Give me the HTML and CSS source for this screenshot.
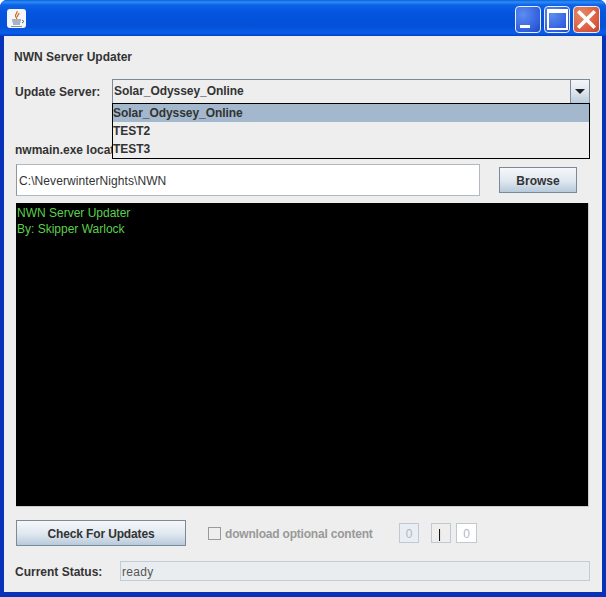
FILE: index.html
```html
<!DOCTYPE html>
<html lang="en">
<head>
<meta charset="utf-8">
<title>NWN Server Updater</title>
<link rel="stylesheet" href="styles.css">
</head>
<body>
<div class="window">
  <header class="titlebar">
    <div class="app-icon">
      <svg width="18" height="20" viewBox="0 0 18 20">
        <path d="M9 2c1 2-2 3-1.500 5s1.500 1 1 3M11 4c0 2-2 2-1.500 4" fill="none" stroke="#d2691e" stroke-width="1.200"/>
        <path d="M4 11h9M4.500 13h8M5 15h7" stroke="#5a7184" stroke-width="1.100"/>
        <path d="M14 11l2 1.500-2 1.500" fill="none" stroke="#5a7184"/>
        <path d="M3 17.500h11" stroke="#7f93a5" stroke-width="1"/>
      </svg>
    </div>
    <div class="controls">
      <div class="ctl ctl-min"><span class="min-glyph"></span></div>
      <div class="ctl ctl-max"><span class="max-glyph"></span></div>
      <div class="ctl ctl-close">
        <svg width="21" height="21" viewBox="0 0 21 21"><path d="M3.500 3.500L17.500 17.500M17.500 3.500L3.500 17.500" stroke="#fff" stroke-width="3.600" stroke-linecap="square"/></svg>
      </div>
    </div>
  </header>
  <main class="content">
    <div class="heading">NWN Server Updater</div>
    <div class="server-row">
      <label class="label server-label">Update Server:</label>
      <div class="combo">
        <div class="combo-value">Solar_Odyssey_Online</div>
        <div class="combo-arrow"><span class="arrow"></span></div>
        <ul class="popup">
          <li class="popup-item selected">Solar_Odyssey_Online</li>
          <li class="popup-item">TEST2</li>
          <li class="popup-item">TEST3</li>
        </ul>
      </div>
    </div>
    <div class="label location-label">nwmain.exe location:</div>
    <div class="path-row">
      <div class="path-field">C:\NeverwinterNights\NWN</div>
      <button class="btn browse">Browse</button>
    </div>
    <div class="console">
      <div>NWN Server Updater</div>
      <div>By: Skipper Warlock</div>
    </div>
    <div class="action-row">
      <button class="btn check">Check For Updates</button>
      <div class="check-wrap">
        <span class="checkbox"></span>
        <span class="check-label">download optional content</span>
      </div>
      <div class="count count-a">0</div>
      <div class="count count-b"><span class="pipe">|</span></div>
      <div class="count count-c">0</div>
    </div>
    <div class="status-row">
      <div class="label status-label">Current Status:</div>
      <div class="status-field">ready</div>
    </div>
  </main>
</div>
</body>
</html>
```
FILE: styles.css
```css
* { box-sizing: border-box; }
html, body { margin: 0; padding: 0; }
body { width: 606px; height: 597px; overflow: hidden; background: #ffffff; font-family: "Liberation Sans", Arial, sans-serif; font-size: 12px; }
.window { width: 606px; height: 597px; display: flex; flex-direction: column; background: #0832b8; border-radius: 7px 7px 0 0; overflow: hidden; }
.titlebar { height: 36px; flex: none; display: flex; align-items: flex-start; justify-content: space-between; padding: 6px 6px 0 7px;
  background: linear-gradient(#0a5fe0 0, #2f8cf5 2px, #0c63e6 5px, #0555e0 12px, #0450d8 26px, #0a5ee8 33px, #0540c8 36px); }
.app-icon { width: 19px; height: 19px; margin-top: 3px; background: #f4f6fa; border-radius: 3px; display: flex; align-items: center; justify-content: center; }
.controls { display: flex; gap: 3px; }
.ctl { width: 26px; height: 27px; border: 1px solid #e8eefc; border-radius: 4px; position: relative; display: flex; align-items: center; justify-content: center; }
.ctl-min { background: radial-gradient(circle at 30% 30%, #5d8cf2, #2f5fdc 70%, #2049b8); }
.ctl-max { background: radial-gradient(circle at 30% 30%, #5d8cf2, #2f5fdc 70%, #2049b8); }
.ctl-close { width: 27px; background: radial-gradient(circle at 30% 30%, #e88a68, #d9583a 70%, #c04428); }
.min-glyph { position: absolute; left: 4px; bottom: 4px; width: 10px; height: 3px; background: #fff; }
.max-glyph { width: 21px; height: 21px; border: 2px solid #fff; border-top-width: 4px; }
.content { flex: 1; margin: 0 4px 5px 4px; background: #eeeeee; padding: 0 0 0 9px; color: #333333; display: flex; flex-direction: column; position: relative; }
.label, .heading { font-weight: bold; font-size: 12px; color: #333333; line-height: 14px; }
.heading { margin: 14px 0 0 1px; }
.server-row { display: flex; align-items: center; margin-top: 15px; height: 25px; }
.server-label { width: 97px; margin-left: 2px; flex: none; }
.combo { width: 478px; height: 25px; position: relative; display: flex; border: 1px solid #7a8a99; background: #eeeeee; }
.combo-value { flex: 1; font-weight: bold; line-height: 22px; padding-left: 1px; color: #333333; letter-spacing: -0.05px; }
.combo-arrow { width: 19px; flex: none; border-left: 1px solid #7a8a99; background: linear-gradient(#f4f6f8, #dfe7ee 50%, #b9cbdc); display: flex; align-items: center; justify-content: center; }
.arrow { width: 0; height: 0; border-left: 5px solid transparent; border-right: 5px solid transparent; border-top: 5px solid #222222; }
.popup { position: absolute; left: -1px; top: 23px; width: 478px; height: 56px; margin: 0; padding: 0; list-style: none; border: 1px solid #000000; background: #eeeeee; z-index: 2; }
.popup-item { height: 18px; line-height: 18px; font-weight: bold; color: #333333; letter-spacing: -0.05px; }
.popup-item.selected { background: #a3b8cc; }
.location-label { margin: 39px 0 0 2px; }
.path-row { display: flex; align-items: center; margin: 7px 0 0 3px; height: 32px; }
.path-field { width: 464px; height: 32px; background: #ffffff; border: 1px solid #b0b8c0; border-left-color: #8a96a2; line-height: 32px; padding-left: 2px; color: #333333; letter-spacing: 0.08px; }
.btn { font-family: inherit; font-size: 12px; font-weight: bold; color: #333333; border: 1px solid #7a8a99; background: linear-gradient(#f6f8fa, #dfe7ef 55%, #b8cadb); padding: 1px 0 0; height: 26px; }
.browse { width: 78px; margin-left: 19px; }
.check { letter-spacing: -0.13px; }
.console { width: 573px; height: 304px; margin: 7px 0 0 3px; background: #000000; color: #5ccf4c; font-size: 12px; line-height: 16px; padding: 2px 0 0 1px; border-right: 1px solid #c8ccd0; border-bottom: 1px solid #c8ccd0; }
.action-row { display: flex; align-items: center; margin: 13px 0 0 3px; height: 26px; }
.check { width: 170px; flex: none; }
.check-wrap { display: flex; align-items: center; margin-left: 22px; width: 191px; flex: none; }
.checkbox { width: 13px; height: 13px; border: 1px solid #9a9a9a; background: #eeeeee; flex: none; }
.check-label { margin-left: 4px; font-weight: bold; color: #999999; white-space: nowrap; letter-spacing: -0.2px; padding-top: 1px; }
.count { width: 20px; height: 20px; border: 1px solid #c0c8d0; text-align: center; line-height: 20px; color: #b0b8c0; flex: none; font-size: 12px; }
.count-a { background: #e8eef4; }
.count-b { margin-left: 12px; color: #000000; background: #eeeeee; padding-right: 2px; }
.pipe { display: inline-block; will-change: transform; }
.count-c { margin-left: 5px; width: 21px; background: #ffffff; }
.status-row { display: flex; align-items: center; margin: 15px 0 0 2px; height: 20px; }
.status-label { width: 105px; flex: none; padding-top: 1px; height: 15px; }
.status-field { width: 470px; height: 20px; background: #eaedf0; border: 1px solid #c0ccd8; color: #555555; line-height: 20px; padding-left: 1px; letter-spacing: 0.3px; }
```
